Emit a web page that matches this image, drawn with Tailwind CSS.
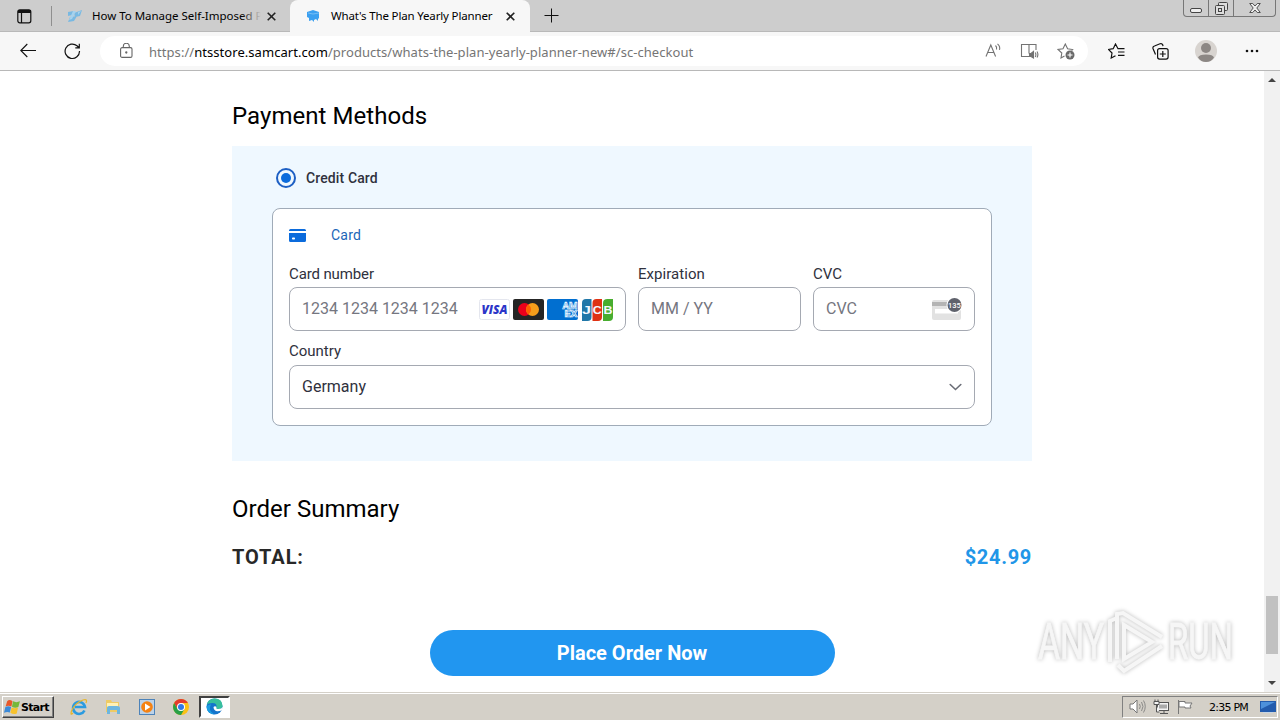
<!DOCTYPE html>
<html lang="en">
<head>
    <meta charset="UTF-8">
    <meta name="viewport" content="width=device-width, initial-scale=1.0">
    <title>What's The Plan Yearly Planner</title>
    <script src="https://cdn.jsdelivr.net/npm/@tailwindcss/browser@4"></script>
</head>
<body class="w-[1280px] h-[720px] overflow-hidden bg-white flex flex-col font-['Roboto',sans-serif]">

    <!-- Tab strip -->
    <header class="h-8 shrink-0 bg-[#cdcdcd] border-b border-[#b9b9b9] flex items-start font-['Noto_Sans',sans-serif] text-black">
        <div class="w-[51px] h-8 pl-[17px] pt-[9px]">
            <svg width="15" height="15" viewBox="0 0 15 15" fill="none" stroke="#111"><rect x=".8" y=".8" width="13" height="13" rx="2" stroke-width="1.2"/><path d="M1 2.5h13" stroke-width="3"/><path d="M4.5 3v11" stroke-width="1.2"/></svg>
        </div>
        <div class="w-px h-5 mt-1.5 bg-[#8f8f8f]"></div>
        <div class="w-[238px] h-8 pl-3.5 flex items-center">
            <svg class="shrink-0" width="17" height="14" viewBox="0 0 17 14"><path d="M2 3l6-1-2 4-4 1zM8 4l8-3-2 6-5 1zM4 8l7-1-3 5-6 1z" fill="#79b9e2"/><path d="M7 2h3L6 10l-3 1zM12 3l3-1-3 4z" fill="#a6d2ee"/></svg>
            <div class="relative ml-[9px] w-[169px] overflow-hidden whitespace-nowrap text-[11.5px] leading-4">
                <span class="tracking-[-0.02px]">How To Manage Self-Imposed P</span>
                <div class="absolute inset-y-0 right-0 w-5 bg-linear-to-r from-[#cdcdcd]/0 to-[#cdcdcd]"></div>
            </div>
            <svg class="ml-[6px] shrink-0" width="9" height="9" viewBox="0 0 9 9" stroke="#222" stroke-width="1.6"><path d="M.7.7l7.6 7.6M8.3.7L.7 8.3"/></svg>
        </div>
        <div class="w-[240px] h-8 pl-4 bg-[#f7f7f7] rounded-t-lg flex items-center">
            <svg class="shrink-0" width="15" height="12" viewBox="0 0 15 12"><path d="M1 2l6-2 6 2v6l-1 1v2l-2-2-2 1v2l-2-2-3 1V8L1 7z" fill="#3ca0f0"/><path d="M2 3l5 1 6-1" fill="none" stroke="#8ccaf8" stroke-width=".7"/></svg>
            <span class="ml-2.5 w-[175px] whitespace-nowrap text-[11.5px] leading-4 tracking-[-0.16px]">What's The Plan Yearly Planner</span>
            <svg class="shrink-0" width="9" height="9" viewBox="0 0 9 9" stroke="#222" stroke-width="1.6"><path d="M.7.7l7.6 7.6M8.3.7L.7 8.3"/></svg>
        </div>
        <svg class="ml-3.5 mt-2" width="15" height="15" viewBox="0 0 15 15" stroke="#111"><path d="M7.5.5v14M.5 7.5h14"/></svg>
        <!-- Window buttons -->
        <div class="ml-auto mr-1 w-[93px] h-[17px] border border-t-0 border-[#777] rounded-b flex text-[#444]">
            <div class="w-[25px] border-r border-[#777] flex justify-center pt-2"><svg width="12" height="5" viewBox="0 0 12 5"><rect x=".5" y=".5" width="11" height="4" rx="1.5" fill="#eee" stroke="currentColor"/></svg></div>
            <div class="w-[25px] border-r border-[#777] flex justify-center pt-0.5"><svg width="13" height="13" viewBox="0 0 13 13" fill="#ddd" stroke="currentColor"><rect x="3.5" y=".5" width="9" height="8" rx="1"/><rect x=".5" y="3.5" width="9" height="9" rx="1"/><rect x="3.5" y="6.5" width="3" height="3"/></svg></div>
            <div class="flex-1 flex justify-center pt-[3px]"><svg width="12" height="10" viewBox="0 0 12 10" fill="#eee" stroke="currentColor" stroke-width=".9"><path d="M.7.5h3L6 3 8.3.5h3L7.8 5l3.5 4.5h-3L6 7 3.7 9.5h-3L4.200 5z"/></svg></div>
        </div>
    </header>

    <!-- Address bar -->
    <nav class="h-[39px] shrink-0 bg-[#f7f7f7] border-b border-[#b8b8b8] flex items-center font-['Noto_Sans',sans-serif]">
        <div class="w-[100px] flex items-center pl-5 gap-[27px]">
            <svg width="17" height="16" viewBox="0 0 17 16" fill="none" stroke="#111" stroke-width="1.1"><path d="M16 7.5H.8M7.3 1L.8 7.5 7.3 14"/></svg>
            <svg width="17" height="17" viewBox="0 0 17 17" fill="none" stroke="#111" stroke-width="1.2"><path d="M15.5 8A7.2 7.2 0 1 1 13 2.8L15 4.7M15.3.8v4h-4"/></svg>
        </div>
        <div class="w-[988px] h-[30px] rounded-full bg-white flex items-center pl-5">
            <svg width="13" height="16" viewBox="0 0 13 16" fill="none" stroke="#666" stroke-width="1.1"><rect x=".6" y="4.6" width="11.4" height="9.8" rx="1.5"/><path d="M3.3 4.5V3.3a3 3 0 0 1 6 0v1.2"/><circle cx="6.3" cy="9.5" r=".6" fill="#666"/></svg>
            <span class="ml-4 pt-px whitespace-nowrap text-[13px] leading-5 tracking-[0.05px] text-[#757575]">https://<span class="text-black">ntsstore.samcart.com</span>/products/whats-the-plan-yearly-planner-new#/sc-checkout</span>
            <div class="ml-auto mr-[13px] flex items-center gap-[18px] text-[#737373]">
                <svg width="17" height="16" viewBox="0 0 17 16" fill="none" stroke="currentColor" stroke-width="1.1"><path d="M1 13.5L5.800 2l4.800 11.500M2.700 9.500H9M10.500 2.500q1.600 1.500 1 4M12.500.8q3 2.500 2 6"/></svg>
                <svg width="19" height="16" viewBox="0 0 19 16" fill="none" stroke="currentColor" stroke-width="1.1"><path d="M9 13.5H1.500v-12H9v9M9 1.500h7V7"/><path d="M9.500 10.500H11l2.500-2V15L11 13.500H9.500z" fill="currentColor"/><path d="M15.300 9.500q1.200 2 0 4.500M17 8.500q1.800 3 0 6"/></svg>
                <svg width="18" height="17" viewBox="0 0 18 17" fill="none" stroke="currentColor" stroke-width="1.1"><path d="M7.500 13L4 15l.8-5L1 6.500l5-.8L8.300 1l2.300 4.700 5 .8-1 1"/><circle cx="13" cy="12" r="4.500" fill="#6a6a6a" stroke="none"/><path d="M13 9.500v5M10.500 12h5" stroke="#fff"/></svg>
            </div>
        </div>
        <div class="ml-5 flex items-center">
            <svg width="17" height="16" viewBox="0 0 17 16" fill="none" stroke="#111" stroke-width="1.2"><path d="M16.500 5.700H10L7.500 1 5.200 5.700l-4.700.8L4 10l-.8 5 4.300-2.300M10 9h6.500M10 12.300h6.500"/></svg>
            <svg class="ml-[27px]" width="17" height="17" viewBox="0 0 17 17" fill="none" stroke="#111" stroke-width="1.2"><path d="M3.500 11.500L1 5.500Q.5 3.500 2.500 3L8 .8q2-.6 2.700 1L11 3.200"/><rect x="5.600" y="5.600" width="10.500" height="10.500" rx="2"/><path d="M10.800 8v6M7.800 11h6"/></svg>
            <svg class="ml-[26px]" width="22" height="22" viewBox="0 0 22 22"><circle cx="11" cy="11" r="11" fill="#d8d4d0"/><circle cx="11" cy="8" r="5" fill="#8c8784"/><path d="M3 17.500Q4 14.500 11 14.500t8 3Q16 22 11 22t-8-4.500" fill="#8c8784"/></svg>
            <svg class="ml-7" width="14" height="4" viewBox="0 0 14 4" fill="#111"><circle cx="2" cy="2" r="1.300"/><circle cx="7" cy="2" r="1.300"/><circle cx="12" cy="2" r="1.300"/></svg>
        </div>
    </nav>

    <!-- Page -->
    <div class="relative h-[621px] shrink-0 flex">
        <main class="w-[1264px] pl-[232px] text-[#30313d]">
            <div class="w-[800px] flex flex-col">
                <h1 class="mt-[29px] h-[46px] text-2xl leading-8 text-black tracking-[0.05px]">Payment Methods</h1>

                <section class="h-[315px] bg-[#eff8ff] px-10 pt-[22px]">
                    <label class="flex items-center h-5 pl-1">
                        <span class="size-5 rounded-full border-2 border-[#1d5fc4] flex items-center justify-center"><span class="size-2.5 rounded-full bg-[#0b6bdc]"></span></span>
                        <span class="ml-2.5 text-sm font-medium tracking-[0.12px]">Credit Card</span>
                    </label>

                    <div class="mt-5 h-[218px] border border-[#a0abb8] rounded-lg bg-white px-4">
                        <div class="h-[52px] flex items-center gap-[25px] text-[#1c66b8] text-sm tracking-[0.25px]">
                            <svg width="17" height="13" viewBox="0 0 17 13" fill="#0b6bdc"><path d="M1.500 0h14Q17 0 17 1.500V2H0v-.5Q0 0 1.500 0M0 4h17v7.500q0 1.500-1.500 1.500h-14Q0 13 0 11.500z"/><rect x="3" y="8.500" width="3" height="2" rx=".8" fill="#fff"/></svg>
                            <span>Card</span>
                        </div>
                        <div class="flex gap-3 text-[15px] leading-[18px]">
                            <div class="w-[337px] pt-1">
                                <p class="h-[22px] tracking-[-0.12px]">Card number</p>
                                <div class="h-11 border border-[#a5a9b2] rounded-lg pl-3 pr-[11px] flex items-center justify-between">
                                    <span class="text-base text-[#757680]">1234 1234 1234 1234</span>
                                    <!-- Accepted brands -->
                                    <div class="flex gap-[3px] pt-px">
                                        <svg width="31" height="21" viewBox="0 0 31 21"><rect x=".5" y=".5" width="30" height="20" rx="2" fill="#fff" stroke="#e4e6ee"/><text x="2.500" y="14.500" font-family="Open Sans, sans-serif" font-weight="800" font-style="italic" font-size="11.500" textLength="26" lengthAdjust="spacingAndGlyphs" fill="#2b35c8">VISA</text></svg>
                                        <svg width="31" height="21" viewBox="0 0 31 21"><rect width="31" height="21" rx="2" fill="#252525"/><circle cx="11.500" cy="10.500" r="6.500" fill="#eb001b"/><circle cx="19.500" cy="10.500" r="6.500" fill="#f79e1b"/><path d="M15.500 5.400a6.500 6.500 0 0 1 0 10.200a6.500 6.500 0 0 1 0-10.200" fill="#ff5f00"/></svg>
                                        <svg width="31" height="21" viewBox="0 0 31 21"><rect width="31" height="21" rx="2" fill="#016fd0"/><g font-family="Roboto, sans-serif" font-weight="700" font-size="9" fill="none" stroke="#e3f3ff" stroke-width=".7"><text x="15.500" y="10" textLength="15" lengthAdjust="spacingAndGlyphs">AM</text><text x="17.500" y="17.500" textLength="13" lengthAdjust="spacingAndGlyphs">EX</text></g></svg>
                                        <svg width="33" height="22" viewBox="0 0 33 22"><path d="M5 0h5.500v18q0 4-4 4H1V4q0-4 4-4" fill="#2077a8"/><path d="M15.500 0h5.500v18q0 4-4 4h-5.500V4q0-4 4-4" fill="#df3213"/><path d="M26.500 0H32v18q0 4-4 4h-6V4q0-4 4.500-4" fill="#48ad2f"/><g font-family="Liberation Sans, sans-serif" font-weight="700" font-size="11" fill="#f2f8ff"><text x="1" y="15" textLength="9" lengthAdjust="spacingAndGlyphs">J</text><text x="11.800" y="15" textLength="9" lengthAdjust="spacingAndGlyphs">C</text><text x="22.500" y="15" textLength="9" lengthAdjust="spacingAndGlyphs">B</text></g></svg>
                                    </div>
                                </div>
                            </div>
                            <div class="w-[163px] pt-1">
                                <p class="h-[22px] tracking-[0.05px]">Expiration</p>
                                <div class="h-11 border border-[#a5a9b2] rounded-lg px-3 flex items-center text-base text-[#757680]">MM / YY</div>
                            </div>
                            <div class="w-[162px] pt-1">
                                <p class="h-[22px]">CVC</p>
                                <div class="h-11 border border-[#a5a9b2] rounded-lg px-3 flex items-center justify-between text-base text-[#757680]">
                                    <span>CVC</span>
                                    <svg width="30" height="24" viewBox="0 0 30 24"><rect y="3" width="29" height="20" rx="2" fill="#e2e2e2"/><path d="M0 5h29v4H0z" fill="#b4b4b4"/><path d="M3 12h23v4.500H3z" fill="#fff"/><circle cx="22.500" cy="8" r="8" fill="#fff"/><circle cx="22.500" cy="8" r="7" fill="#5f626c"/><text x="22.500" y="10.800" font-family="Roboto, sans-serif" font-weight="500" font-size="7.500" text-anchor="middle" fill="#fff">135</text></svg>
                                </div>
                            </div>
                        </div>
                        <p class="mt-[11px] h-[23px] text-[15px] leading-[18px]">Country</p>
                        <div class="h-11 border border-[#a5a9b2] rounded-lg px-3 flex items-center justify-between text-base">
                            <span>Germany</span>
                            <svg width="13" height="8" viewBox="0 0 13 8" fill="none" stroke="#6a6d76" stroke-width="1.600" stroke-linecap="round"><path d="M1.200 1.500l5.300 5 5.300-5"/></svg>
                        </div>
                    </div>
                </section>

                <h2 class="mt-8 text-2xl leading-8 text-black tracking-[0.02px]">Order Summary</h2>
                <div class="mt-5 flex justify-between text-xl leading-6 font-bold tracking-[0.9px]">
                    <span class="text-[#282828]">TOTAL:</span>
                    <span class="text-[#2196e8] tracking-[0.7px]">$24.99</span>
                </div>
                <button class="self-center mt-[61px] h-[46px] w-[405px] rounded-full bg-[#2196f0] text-white text-xl font-bold">Place Order Now</button>
            </div>
        </main>

        <!-- Scrollbar -->
        <aside class="w-4 bg-[#f1f1f1] flex flex-col items-center">
            <svg class="mt-[7px]" width="8" height="4" viewBox="0 0 8 4"><path d="M0 4l4-4 4 4z" fill="#444"/></svg>
            <div class="mt-[514px] w-3 h-[58px] bg-[#c1c1c1]"></div>
            <svg class="mt-[27px]" width="8" height="4" viewBox="0 0 8 4"><path d="M0 0h8L4 4z" fill="#444"/></svg>
        </aside>

        <!-- Watermark -->
        <svg class="absolute left-[1030px] top-[534px] drop-shadow-[0_0_2px_rgba(0,0,0,0.28)]" width="220" height="76" viewBox="0 0 220 76">
            <g font-family="Roboto, sans-serif" font-size="50" fill="#f6f6f6" stroke="#f6f6f6" stroke-width=".8">
                <text x="8" y="54" textLength="66" lengthAdjust="spacingAndGlyphs">ANY</text>
                <text x="138" y="54" textLength="65" lengthAdjust="spacingAndGlyphs">RUN</text>
            </g>
            <g fill="none" stroke="#f6f6f6" stroke-width="4"><path d="M80 57V16l7-3"/><path d="M87 54V9l6-1 39 24"/><path d="M94 20l28 17-28 17z"/><path d="M88 60l6 6 38-25"/></g>
        </svg>
    </div>

    <!-- Taskbar -->
    <footer class="h-[28px] shrink-0 bg-[#d4d0c8] border-t border-[#d4d0c8]">
        <div class="h-[27px] border-t border-white flex items-center pl-0.5 pb-px">
            <div class="w-[52px] h-[22px] border border-t-white border-l-white border-r-[#404040] border-b-[#404040] shadow-[inset_-1px_-1px_0_#808080] flex items-center pl-px">
                <svg width="17" height="16" viewBox="0 0 16 15"><path d="M3 2q2-2 5 0L7 7Q4 5.500 1.500 7z" fill="#e8582a"/><path d="M8.500 2.200q3 1.500 6.500 0L13.500 7.500Q10.500 9 7.500 7.200z" fill="#76b83a"/><path d="M1.300 7.500Q4 6 6.700 7.500l-1.200 5.200Q3 11.500 0 13z" fill="#3c8ad8"/><path d="M7.200 8q3 1.500 6 0L12 13.500q-3 1.500-6-.5z" fill="#f7c22d"/></svg>
                <span class="font-['DejaVu_Sans',sans-serif] font-bold text-[11px] leading-4 tracking-[-0.7px] text-black pt-0.5">Start</span>
            </div>
            <div class="ml-4 flex items-center">
                <svg width="18" height="18" viewBox="0 0 18 18" fill="none"><path d="M14.500 12.500A6 6 0 1 1 15 9H5" stroke="#2b9be0" stroke-width="2.600"/><path d="M3 15Q0 18 1.500 13 5 5 13 2q5-1.500 3 3" stroke="#e6b62e" stroke-width="1.300"/></svg>
                <svg class="ml-[17px]" width="16" height="16" viewBox="0 0 16 16"><path d="M1 1h5l1 2h7v10H1z" fill="#eecb65"/><path d="M2 4h11v4H2z" fill="#fff1b5"/><path d="M2 9q0-2 2-2h8q3 0 3 2v6h-3v-4H5v4H2z" fill="#6db6df"/></svg>
                <svg class="ml-[18px]" width="16" height="16" viewBox="0 0 16 16"><rect x=".5" y=".5" width="15" height="15" fill="#bcd2e8" stroke="#4d83b9"/><circle cx="8" cy="8" r="5.800" fill="#f58212"/><path d="M6 4.500L11.500 8 6 11.500z" fill="#fff"/></svg>
                <svg class="ml-[18px]" width="16" height="16" viewBox="0 0 16 16"><circle cx="8" cy="8" r="8" fill="#fbc116"/><path d="M1.100 4A8 8 0 0 1 14.900 4H8L4.500 10z" fill="#e33b2e"/><path d="M1.100 4A8 8 0 0 0 8 16l3.500-6H4.500z" fill="#28a047"/><circle cx="8" cy="8" r="4" fill="#fff"/><circle cx="8" cy="8" r="3" fill="#3079e8"/></svg>
            </div>
            <div class="ml-2.5 w-[31px] h-[22px] border-2 border-t-[#404040] border-l-[#404040] border-r-white border-b-white bg-white flex items-center justify-center">
                <svg width="17" height="17" viewBox="0 0 17 17"><circle cx="8.500" cy="8.500" r="8" fill="#1474cb"/><path d="M.7 7Q2 .5 8.700.5q7.300 0 7.800 7 0 3.500-4 3.500-3 0-2-2Q11 5 6.500 5 2 5 .7 7" fill="#38bf9c"/><path d="M10.500 9q-1 2 2 2 3 0 4.200-2l-1 3.500Q13 13.500 11 13.300 7.500 12.500 7.500 9 9 7.500 10.500 9" fill="#fff"/><path d="M5 6.500q-3.500 6 3.500 10Q1 16 .5 9 1.500 6 5 6.500" fill="#1b9de2"/></svg>
            </div>
            <div class="ml-auto mr-0.5 w-[156px] h-[22px] border border-t-[#808080] border-l-[#808080] border-r-white border-b-white flex items-center pl-1.5">
                <svg width="17" height="15" viewBox="0 0 17 15" fill="none" stroke="#777"><path d="M1 5h3l4-4v13l-4-4H1z" fill="#fff"/><path d="M10.500 5q1.500 2.500 0 5M12.500 3q3 4.500 0 9M14.500 1.500q3.500 6 0 12" stroke-width=".8"/></svg>
                <svg class="ml-[7px]" width="17" height="16" viewBox="0 0 17 16" fill="#f4f4f4" stroke="#555"><rect x="4.500" y="3.500" width="11" height="8"/><path d="M6 5.500h8v4H6z" fill="#aaa" stroke="none"/><path d="M7 14.500h8M11 12v2M1 2.500h5v3H1zM2 .5v2M5 .5v2M3.500 6v7h3"/></svg>
                <svg class="ml-[7px]" width="16" height="16" viewBox="0 0 16 16" fill="#fff" stroke="#777"><path d="M1.500 1v14M2 2.500h6v1.500h7l-2 3 1 2H8V8H2z"/></svg>
                <span class="ml-4 whitespace-nowrap font-['DejaVu_Sans',sans-serif] text-[11px] leading-4 tracking-[-0.75px] text-black pt-0.5">2:35 PM</span>
                <svg class="ml-auto mr-px" width="16" height="14" viewBox="0 0 16 14"><path d="M0 1h16v11H0z" fill="#245cad"/><path d="M1 2h14L1 9z" fill="#4e91db"/><path d="M3 12h10v1H3z" fill="#c6d5e5"/></svg>
            </div>
        </div>
    </footer>
</body>
</html>
